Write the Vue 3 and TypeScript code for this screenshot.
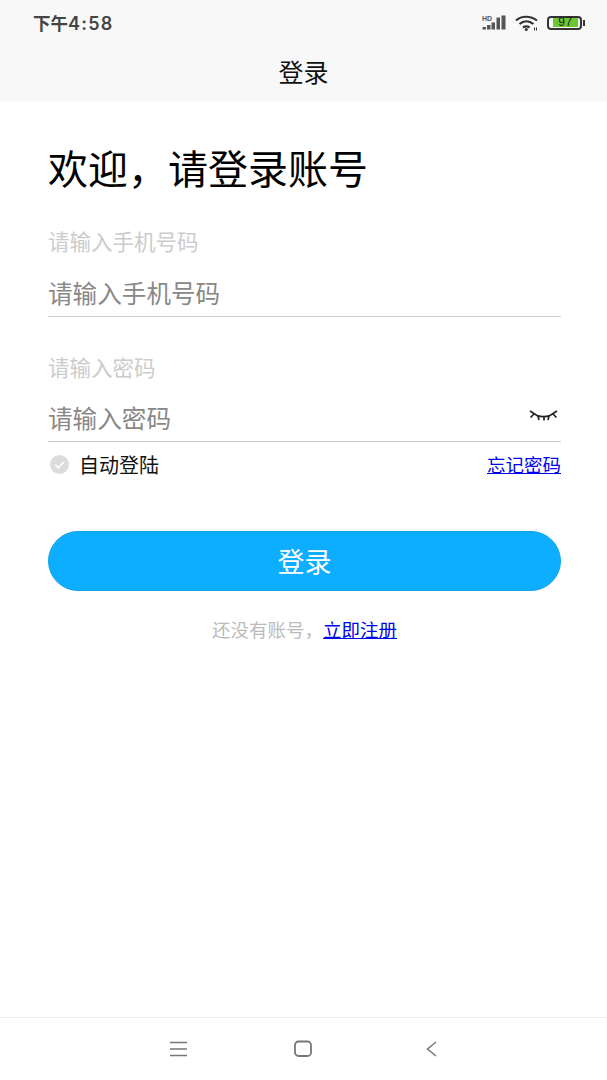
<script setup lang="ts">
const hours = '下午'
const clock = '4:58'
</script>

<template>
  <div class="page">
    <header class="head">
      <div class="status">
        <span class="time">{{ hours }}<span class="digits">{{ clock }}</span></span>
        <div class="sys">
          <svg width="24" height="15" viewBox="0 0 24 15" class="sig">
            <text x="0" y="5.500" class="hd">HD</text>
            <rect x="0.500" y="12" width="3.500" height="2.500" fill="#555" />
            <rect x="5" y="10" width="3.500" height="4.500" fill="#555" />
            <rect x="9.500" y="7.500" width="3.500" height="7" fill="#555" />
            <rect x="14.500" y="2.500" width="3.500" height="12" fill="#555" />
            <rect x="19.500" y="0.500" width="4" height="14" fill="#555" />
          </svg>
          <svg width="23" height="16" viewBox="0 0 23 16" fill="none" stroke="#333" stroke-width="2.200">
            <path d="M1 5.500C6.500 0.500 15.500 0.500 22 5.500" />
            <path d="M4.500 9C8.500 5.500 14 5.500 18.500 9" />
            <path d="M8 12.500C10 11 12.500 11 14.500 12.500" />
            <circle cx="11.300" cy="14.500" r="1.500" fill="#333" stroke="none" />
            <path d="M19.500 12.500V15.500M21.500 12.500V15.500" stroke-width="1" />
          </svg>
          <div class="power">
            <div class="batt"><div class="cell">97</div></div>
            <i class="nub"></i>
          </div>
        </div>
      </div>
      <h1 class="nav">登录</h1>
    </header>

    <main class="form">
      <h2 class="hello">欢迎，请登录账号</h2>
      <label class="lab">请输入手机号码</label>
      <div class="field"><span class="ph">请输入手机号码</span></div>
      <label class="lab second">请输入密码</label>
      <div class="field tight">
        <span class="ph">请输入密码</span>
        <svg width="29" height="12" viewBox="0 0 29 12" fill="none" stroke="#222" stroke-width="1.700" class="eye">
          <path d="M1 2L8 6.500C12 8 17 8 21 6.500L28 2" />
          <path d="M1.500 8.500L5 5M27.500 8.500L24 5M9 7L10 11M15 8V11.500M20 7L19 11" />
        </svg>
      </div>
      <div class="opts">
        <div class="auto">
          <svg width="19" height="19" viewBox="0 0 20 20">
            <circle cx="10" cy="10" r="10" fill="#dcdcdc" />
            <path d="M5.500 10.500L8.800 13.500L14.500 7.500" fill="none" stroke="#fff" stroke-width="1.800" />
          </svg>
          <span>自动登陆</span>
        </div>
        <a class="link">忘记密码</a>
      </div>
      <button class="btn">登录</button>
      <p class="reg">还没有账号，<a class="link">立即注册</a></p>
    </main>

    <footer class="bar">
      <svg width="20" height="16" viewBox="0 0 20 16" stroke="#777" stroke-width="1.300"><path d="M2 1.500H19M2 8H19M2 14.500H19" /></svg>
      <svg width="20" height="18" viewBox="0 0 20 18" fill="none" stroke="#777" stroke-width="1.800"><rect x="2" y="1.500" width="16" height="14.500" rx="3.500" /></svg>
      <svg width="14" height="18" viewBox="0 0 14 18" fill="none" stroke="#777" stroke-width="1.500"><path d="M12 2L3.500 9L12 16" /></svg>
    </footer>
  </div>
</template>

<style scoped>
.page { width: 607px; height: 1080px; display: flex; flex-direction: column; background: #fff; font-family: "Liberation Sans", "Noto Sans CJK SC", sans-serif; overflow: hidden; }
.head { height: 101px; background: #f8f8f8; display: flex; flex-direction: column; }
.status { height: 45px; padding: 0 22px 0 33px; display: flex; justify-content: space-between; align-items: center; }
.time { font-family: Inter, "Noto Sans CJK SC", sans-serif; font-size: 17.500px; font-weight: 600; color: #444; }
.digits { letter-spacing: 1.200px; font-size: 18px; }
.sys { display: flex; align-items: center; gap: 9px; }
.hd { font-size: 7px; font-weight: 700; fill: #555; }
.power { display: flex; align-items: center; gap: 1px; }
.batt { width: 35px; height: 14px; border: 2px solid #333; border-radius: 4px; box-sizing: border-box; padding: 0.500px 2px 0.500px 4px; }
.cell { width: 25px; height: 9px; background: #6cc832; font-size: 12px; line-height: 9px; letter-spacing: 0.500px; text-align: center; color: #222; }
.nub { width: 2px; height: 6px; background: #333; }
.nav { margin: 0; font-size: 25px; font-weight: 400; text-align: center; line-height: 56px; color: #111; }
.form { flex: 1; padding: 46.500px 46px 0 48px; display: flex; flex-direction: column; }
.hello { margin: 0; font-size: 40px; font-weight: 400; line-height: 44px; color: #000; }
.lab { margin-top: 37.500px; font-size: 21.500px; line-height: 28px; color: #ccc; }
.lab.second { margin-top: 38px; }
.field { height: 58px; border-bottom: 1px solid #ccc; display: flex; align-items: center; justify-content: space-between; padding-top: 8px; box-sizing: border-box; margin-top: 2px; }
.field.tight { margin-top: 1px; }
.ph { font-size: 24.600px; color: #888; }
.eye { margin: 0 3px 4px 0; }
.opts { display: flex; justify-content: space-between; align-items: center; height: 44px; }
.auto { display: flex; align-items: center; gap: 10px; font-size: 20px; color: #111; padding-left: 2px; }
.link { color: #00e; text-decoration: underline; font-size: 18.500px; }
.btn { margin-top: 44.500px; height: 60.500px; border: 1px solid #0ea5e9; border-radius: 31px; background: #0daeff; color: #fff; font-size: 27px; font-family: inherit; width: 100%; padding: 0; }
.reg { margin: 29px 0 0; text-align: center; font-size: 18.500px; color: #bbb; line-height: 22px; }
.bar { height: 63px; border-top: 1px solid #eee; padding: 0 0 1px 168px; display: flex; align-items: center; box-sizing: border-box; }
.bar svg:nth-child(2) { margin-left: 105px; }
.bar svg:nth-child(3) { margin-left: 111px; }
</style>
